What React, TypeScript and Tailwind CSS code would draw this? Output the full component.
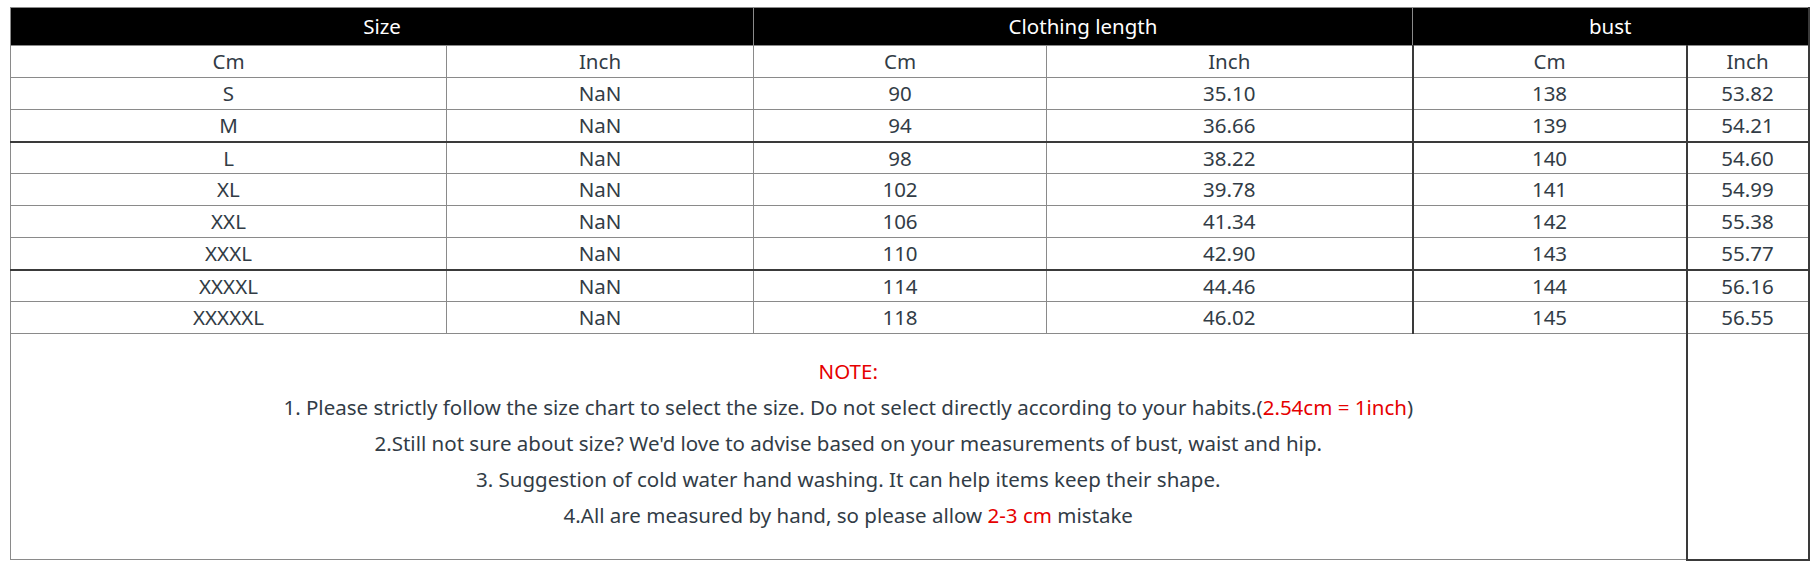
const ROWS: [string, string, string, string, string, string][] = [
  ['S', 'NaN', '90', '35.10', '138', '53.82'],
  ['M', 'NaN', '94', '36.66', '139', '54.21'],
  ['L', 'NaN', '98', '38.22', '140', '54.60'],
  ['XL', 'NaN', '102', '39.78', '141', '54.99'],
  ['XXL', 'NaN', '106', '41.34', '142', '55.38'],
  ['XXXL', 'NaN', '110', '42.90', '143', '55.77'],
  ['XXXXL', 'NaN', '114', '44.46', '144', '56.16'],
  ['XXXXXL', 'NaN', '118', '46.02', '145', '56.55'],
]

// rows after which the line is drawn darker
const DARK_AFTER = [1, 5]

const cell = 'border border-[#8a8a8a] text-center align-middle p-0'
const darkLeft = 'border-l-2 border-l-[#3a3a3a]'

export default function App() {
  return (
    <div
      className="bg-white w-[1815px] h-[564px] pt-[7px] pl-[10px] text-[#323c46]"
      style={{ fontFamily: '"Noto Sans", "Open Sans", Arial, sans-serif' }}
    >
      <table className="table-fixed border-collapse w-[1798px] text-[20.5px] leading-none border-r-2 border-r-[#3a3a3a]">
        <colgroup>
          <col className="w-[436px]" />
          <col className="w-[307px]" />
          <col className="w-[293px]" />
          <col className="w-[366px]" />
          <col className="w-[274px]" />
          <col className="w-[122px]" />
        </colgroup>
        <thead>
          <tr className="h-[38px] bg-black text-white">
            <th colSpan={2} className={`${cell} font-normal`}>Size</th>
            <th colSpan={2} className={`${cell} font-normal`}>Clothing length</th>
            <th colSpan={2} className={`${cell} font-normal`}>bust</th>
          </tr>
        </thead>
        <tbody>
          <tr className="h-[32px]">
            <td className={cell}>Cm</td>
            <td className={cell}>Inch</td>
            <td className={cell}>Cm</td>
            <td className={cell}>Inch</td>
            <td className={`${cell} ${darkLeft}`}>Cm</td>
            <td className={`${cell} ${darkLeft}`}>Inch</td>
          </tr>
          {ROWS.map((r, i) => (
            <tr
              key={r[0]}
              className={DARK_AFTER.includes(i) ? 'h-[32px] border-b-2 border-b-[#3a3a3a]' : 'h-[32px]'}
            >
              {r.map((v, j) => (
                <td
                  key={j}
                  className={`${cell} ${j >= 4 ? darkLeft : ''} ${DARK_AFTER.includes(i) ? 'border-b-2 border-b-[#3a3a3a]' : ''}`}
                >
                  {v}
                </td>
              ))}
            </tr>
          ))}
          <tr className="h-[226px]">
            <td colSpan={5} className={`${cell} align-top`}>
              <div className="flex flex-col items-center pt-[19px] leading-[36px]">
                <p className="text-[#e60000]">NOTE:</p>
                <p>
                  1. Please strictly follow the size chart to select the size. Do not select directly according to your habits.(
                  <span className="text-[#e60000]">2.54cm = 1inch</span>)
                </p>
                <p>2.Still not sure about size? We'd love to advise based on your measurements of bust, waist and hip.</p>
                <p>3. Suggestion of cold water hand washing. It can help items keep their shape.</p>
                <p>
                  4.All are measured by hand, so please allow <span className="text-[#e60000]">2-3 cm</span> mistake
                </p>
              </div>
            </td>
            <td className={`${cell} ${darkLeft} border-b-2 border-b-[#3a3a3a]`} />
          </tr>
        </tbody>
      </table>
    </div>
  )
}
